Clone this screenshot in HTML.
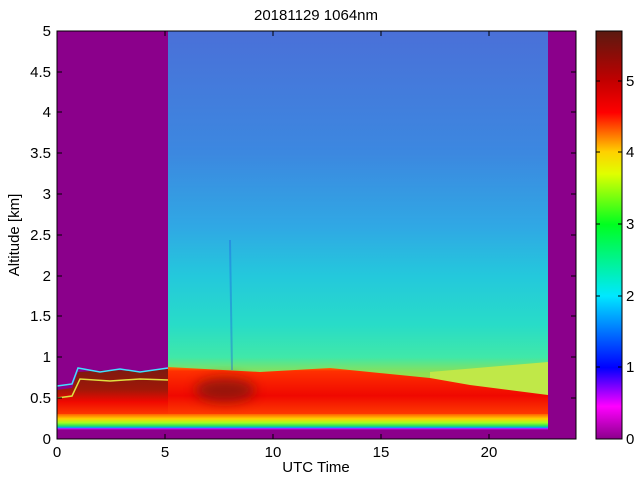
<!DOCTYPE html>
<html><head><meta charset="utf-8"><style>
html,body{margin:0;padding:0;background:#fff;width:640px;height:480px;overflow:hidden}
svg text{font-family:"Liberation Sans",sans-serif;font-size:15px;fill:#000}
</style></head><body>
<svg width="640" height="480" viewBox="0 0 640 480" xmlns="http://www.w3.org/2000/svg">
<defs>
<linearGradient id="bg" x1="0" y1="31" x2="0" y2="439" gradientUnits="userSpaceOnUse">
<stop offset="0" stop-color="#4a70d8"/>
<stop offset="0.3" stop-color="#3c88e0"/>
<stop offset="0.48" stop-color="#30a8e4"/>
<stop offset="0.6" stop-color="#24c8dc"/>
<stop offset="0.72" stop-color="#28dcc8"/>
<stop offset="0.8" stop-color="#40e8a8"/>
<stop offset="0.84" stop-color="#90e050"/>
<stop offset="1" stop-color="#b0e040"/>
</linearGradient>
<linearGradient id="red" x1="0" y1="365" x2="0" y2="416" gradientUnits="userSpaceOnUse">
<stop offset="0" stop-color="#ff9000"/>
<stop offset="0.12" stop-color="#ff3000"/>
<stop offset="0.6" stop-color="#f00800"/>
<stop offset="1" stop-color="#ff4000"/>
</linearGradient>
<linearGradient id="lred" x1="0" y1="368" x2="0" y2="416" gradientUnits="userSpaceOnUse">
<stop offset="0" stop-color="#7a1a10"/>
<stop offset="0.45" stop-color="#a01808"/>
<stop offset="0.7" stop-color="#f00800"/>
<stop offset="1" stop-color="#ff4000"/>
</linearGradient>
<linearGradient id="band" x1="0" y1="414" x2="0" y2="430" gradientUnits="userSpaceOnUse">
<stop offset="0" stop-color="#ff6000"/>
<stop offset="0.3" stop-color="#ffd000"/>
<stop offset="0.55" stop-color="#a0ff20"/>
<stop offset="0.75" stop-color="#20e060"/>
<stop offset="0.85" stop-color="#00a0ff"/>
<stop offset="0.93" stop-color="#d000ff"/>
<stop offset="1" stop-color="#8b008b"/>
</linearGradient>
<linearGradient id="cb" x1="0" y1="31" x2="0" y2="439" gradientUnits="userSpaceOnUse">
<stop offset="0" stop-color="#5a1a10"/>
<stop offset="0.12" stop-color="#c00000"/>
<stop offset="0.2" stop-color="#ff0000"/>
<stop offset="0.296" stop-color="#ffd000"/>
<stop offset="0.35" stop-color="#e0ff00"/>
<stop offset="0.474" stop-color="#00ff20"/>
<stop offset="0.649" stop-color="#00e8ff"/>
<stop offset="0.825" stop-color="#0000ff"/>
<stop offset="0.92" stop-color="#ff00ff"/>
<stop offset="1" stop-color="#8b008b"/>
</linearGradient>
<filter id="bl" x="-50%" y="-50%" width="200%" height="200%"><feGaussianBlur stdDeviation="6"/></filter>
</defs>
<rect x="57" y="31" width="519" height="408" fill="#8b008b"/>
<rect x="168" y="31" width="380" height="398" fill="url(#bg)"/>
<polygon points="430,372 548,362 548,395 430,390" fill="#c0e848"/>
<polygon points="168,367 260,372 330,368 430,378 470,385 548,395 548,416 168,416" fill="url(#red)"/>
<ellipse cx="225" cy="390" rx="30" ry="12" fill="#801808" filter="url(#bl)" opacity="0.8"/>
<polygon points="57,390 72,388 78,372 110,370 140,371 168,369 168,416 57,416" fill="url(#lred)"/>
<polyline points="57,386 72,384 78,368 100,372 120,369 140,372 168,368" fill="none" stroke="#40e0ff" stroke-width="1.5"/>
<polyline points="57,398 72,396 80,379 110,381 140,379 168,380" fill="none" stroke="#e0e040" stroke-width="1.5"/>
<rect x="57" y="414" width="491" height="16" fill="url(#band)"/>
<line x1="230" y1="240" x2="232" y2="370" stroke="#2060e0" stroke-width="2" opacity="0.4"/>
<rect x="57" y="31" width="519" height="408" fill="none" stroke="#000" stroke-width="1"/>
<g stroke="#000" stroke-width="1">
<line x1="57" y1="398" x2="62" y2="398"/><line x1="57" y1="357" x2="62" y2="357"/><line x1="57" y1="316" x2="62" y2="316"/><line x1="57" y1="276" x2="62" y2="276"/><line x1="57" y1="235" x2="62" y2="235"/><line x1="57" y1="194" x2="62" y2="194"/><line x1="57" y1="153" x2="62" y2="153"/><line x1="57" y1="112" x2="62" y2="112"/><line x1="57" y1="72" x2="62" y2="72"/>
<line x1="571" y1="398" x2="576" y2="398"/><line x1="571" y1="357" x2="576" y2="357"/><line x1="571" y1="316" x2="576" y2="316"/><line x1="571" y1="276" x2="576" y2="276"/><line x1="571" y1="235" x2="576" y2="235"/><line x1="571" y1="194" x2="576" y2="194"/><line x1="571" y1="153" x2="576" y2="153"/><line x1="571" y1="112" x2="576" y2="112"/><line x1="571" y1="72" x2="576" y2="72"/>
<line x1="165" y1="439" x2="165" y2="434"/><line x1="273" y1="439" x2="273" y2="434"/><line x1="381" y1="439" x2="381" y2="434"/><line x1="489" y1="439" x2="489" y2="434"/>
<line x1="165" y1="31" x2="165" y2="36"/><line x1="273" y1="31" x2="273" y2="36"/><line x1="381" y1="31" x2="381" y2="36"/><line x1="489" y1="31" x2="489" y2="36"/>
</g>
<g text-anchor="end">
<text x="51" y="444">0</text><text x="51" y="403">0.5</text><text x="51" y="362">1</text><text x="51" y="321">1.5</text><text x="51" y="281">2</text><text x="51" y="240">2.5</text><text x="51" y="199">3</text><text x="51" y="158">3.5</text><text x="51" y="117">4</text><text x="51" y="77">4.5</text><text x="51" y="36">5</text>
</g>
<g text-anchor="middle">
<text x="57" y="457">0</text><text x="165" y="457">5</text><text x="273" y="457">10</text><text x="381" y="457">15</text><text x="489" y="457">20</text>
<text x="316" y="472">UTC Time</text>
<text x="316" y="20">20181129 1064nm</text>
</g>
<text transform="translate(19,235) rotate(-90)" text-anchor="middle">Altitude [km]</text>
<rect x="596" y="31" width="26" height="408" fill="url(#cb)" stroke="#000" stroke-width="1"/>
<g stroke="#000" stroke-width="1">
<line x1="596" y1="81" x2="600" y2="81"/><line x1="618" y1="81" x2="622" y2="81"/>
<line x1="596" y1="152" x2="600" y2="152"/><line x1="618" y1="152" x2="622" y2="152"/>
<line x1="596" y1="224" x2="600" y2="224"/><line x1="618" y1="224" x2="622" y2="224"/>
<line x1="596" y1="296" x2="600" y2="296"/><line x1="618" y1="296" x2="622" y2="296"/>
<line x1="596" y1="367" x2="600" y2="367"/><line x1="618" y1="367" x2="622" y2="367"/>
</g>
<text x="626" y="86">5</text><text x="626" y="157">4</text><text x="626" y="229">3</text><text x="626" y="301">2</text><text x="626" y="372">1</text><text x="626" y="444">0</text>
</svg>
</body></html>
